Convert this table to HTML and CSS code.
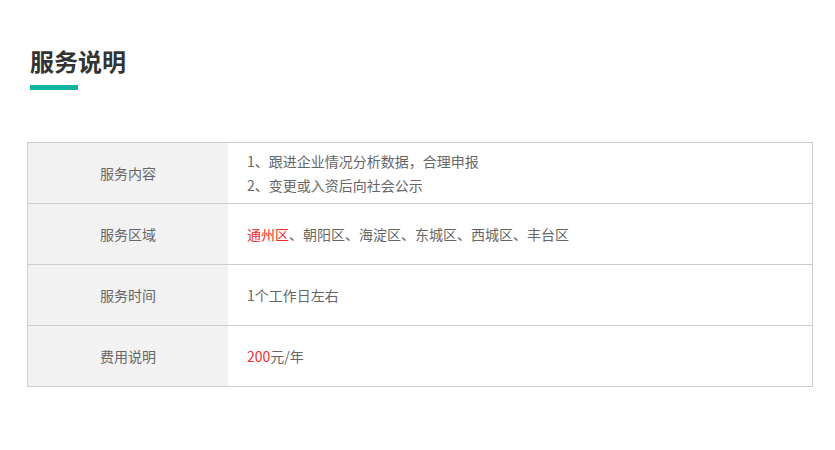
FILE: index.html
```html
<!DOCTYPE html>
<html lang="zh-CN">
<head>
<meta charset="utf-8">
<title>服务说明</title>
<link rel="stylesheet" href="styles.css">
</head>
<body>
<div class="page">
  <div class="head">
    <h2 class="title">服务说明</h2>
    <div class="bar"></div>
  </div>
  <div class="table">
    <div class="row">
      <div class="label">服务内容</div>
      <div class="value">
        <div>
          <p>1、跟进企业情况分析数据，合理申报</p>
          <p>2、变更或入资后向社会公示</p>
        </div>
      </div>
    </div>
    <div class="row">
      <div class="label">服务区域</div>
      <div class="value"><p><span class="red">通州区</span>、朝阳区、海淀区、东城区、西城区、丰台区</p></div>
    </div>
    <div class="row">
      <div class="label">服务时间</div>
      <div class="value"><p>1个工作日左右</p></div>
    </div>
    <div class="row">
      <div class="label">费用说明</div>
      <div class="value"><p><span class="red">200</span>元/年</p></div>
    </div>
  </div>
</div>
</body>
</html>
```
FILE: styles.css
```css
* { box-sizing: border-box; }
html, body { margin: 0; padding: 0; background: #fff; }
body { font-family: "Microsoft YaHei", "Noto Sans CJK SC", "Noto Sans", sans-serif; color: #666; }
.page { padding: 47px 23px 0 27px; width: 835px; }
.head { padding-left: 3px; }
.title { margin: 0; font-size: 24px; line-height: 28px; font-weight: bold; color: #333; }
.bar { width: 48px; height: 5px; background: #13b3a1; margin-top: 10px; }
.table { margin-top: 52px; border: 1px solid #ccc; width: 786px; }
.row { display: flex; height: 61px; border-top: 1px solid #ccc; }
.row:first-child { height: 60px; border-top: none; }
.label { width: 200px; background: #f2f2f2; display: flex; align-items: center; justify-content: center; font-size: 14px; }
.value { flex: 1; display: flex; align-items: center; padding-left: 19px; font-size: 14px; line-height: 24px; }
.value p { margin: 0; }
.red { color: #f32b2b; }
```
